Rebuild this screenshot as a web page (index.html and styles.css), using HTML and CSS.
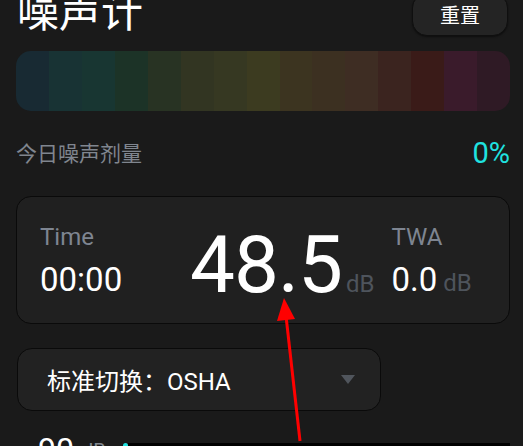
FILE: index.html
```html
<!DOCTYPE html>
<html lang="zh-CN">

<head>
    <title>噪声计</title>
    <meta charset="UTF-8">
    <meta name="viewport" content="width=device-width, initial-scale=1.0">
    <link rel="stylesheet" href="styles.css">
</head>

<body>
    <div class="page">
        <div class="header">
            <h1 class="title">噪声计</h1>
            <button class="btn-reset">重置</button>
        </div>
        <div class="levels">
            <span class="lv1"></span>
            <span class="lv2"></span>
            <span class="lv3"></span>
            <span class="lv4"></span>
            <span class="lv5"></span>
            <span class="lv6"></span>
            <span class="lv7"></span>
            <span class="lv8"></span>
            <span class="lv9"></span>
            <span class="lv10"></span>
            <span class="lv11"></span>
            <span class="lv12"></span>
            <span class="lv13"></span>
            <span class="lv14"></span>
            <span class="lv15"></span>
        </div>
        <div class="dose">
            <span class="dose-label">今日噪声剂量</span>
            <span class="dose-value">0%</span>
        </div>
        <div class="meter">
            <div class="col-time">
                <span class="label">Time</span>
                <span class="value">00:00</span>
            </div>
            <div class="reading">
                <span class="big">48.5</span>
                <span class="unit">dB</span>
            </div>
            <div class="col-twa">
                <span class="label">TWA</span>
                <div class="twa-row">
                    <span class="value">0.0</span>
                    <span class="unit">dB</span>
                </div>
            </div>
        </div>
        <div class="select">
            <span>标准切换：OSHA</span>
            <i class="caret"></i>
        </div>
        <div class="scale">
            <span class="scale-num">90</span>
            <span class="scale-unit">dB</span>
            <i class="dot"></i>
            <i class="track"></i>
        </div>
    </div>
    <!-- 标注箭头 -->
    <svg class="arrow" width="523" height="446" viewBox="0 0 523 446">
        <line x1="300" y1="441" x2="286" y2="316" stroke="#ff0000" stroke-width="3"/>
        <polygon points="284,298 277,321 295,319" fill="#ff0000"/>
    </svg>
</body>

</html>
```

FILE: styles.css
```css
html,
body {
    margin: 0;
    height: 100%;
    overflow: hidden;
}
body {
    background-color: #1a1a1a;
    color: #fff;
    font-family: Roboto, "Noto Sans CJK SC", sans-serif;
}
.page {
    position: relative;
    padding: 0 13px 0 16px;
}
.header {
    display: flex;
    justify-content: space-between;
    align-items: flex-end;
    height: 50px;
    margin-top: -14px;
}
.title {
    margin: 0 0 0 1px;
    font-size: 42px;
    font-weight: normal;
    line-height: 50px;
    position: relative;
    top: 2px;
}
.btn-reset {
    width: 96px;
    height: 43px;
    margin-right: 2px;
    border: 1px solid #0f0f0f;
    border-radius: 15px;
    background-color: #242424;
    color: #fff;
    font-family: "Noto Sans CJK SC", sans-serif;
    font-size: 20px;
    padding-top: 0;
    box-shadow: 0 1px 2px rgba(0,0,0,0.5);
}
.levels {
    display: flex;
    height: 60px;
    margin-top: 15px;
    border-radius: 15px;
    overflow: hidden;
}
.levels>span {
    flex: 1;
}
.lv1 { background-color: #182a33; }
.lv2 { background-color: #183334; }
.lv3 { background-color: #183632; }
.lv4 { background-color: #1c3327; }
.lv5 { background-color: #283323; }
.lv6 { background-color: #323522; }
.lv7 { background-color: #363822; }
.lv8 { background-color: #3c3b20; }
.lv9 { background-color: #3c3420; }
.lv10 { background-color: #3c3021; }
.lv11 { background-color: #3e2d23; }
.lv12 { background-color: #3b241f; }
.lv13 { background-color: #3a1b18; }
.lv14 { background-color: #3a1b2b; }
.lv15 { background-color: #2f1a25; }
.dose {
    display: flex;
    justify-content: space-between;
    align-items: center;
    height: 46px;
    margin-top: 19px;
}
.dose-label {
    font-family: "Noto Sans CJK SC", sans-serif;
    font-size: 21px;
    color: #80868f;
    margin-bottom: 3px;
}
.dose-value {
    font-size: 29px;
    color: #1fe3e0;
}
.meter {
    display: flex;
    align-items: flex-end;
    height: 128px;
    margin-top: 20px;
    padding: 0 20px 24px 23px;
    box-sizing: border-box;
    border: 1.5px solid #0a0a0a;
    border-radius: 15px;
    background-color: #202020;
}
.col-time,
.col-twa {
    display: flex;
    flex-direction: column;
}
.col-time {
    width: 150px;
}
.label {
    font-size: 24px;
    line-height: 28px;
    color: #7e8591;
}
.value {
    font-size: 33px;
    line-height: 38px;
    margin-top: 10px;
}
.reading {
    display: flex;
    align-items: baseline;
}
.big {
    font-size: 80px;
    line-height: 68px;
    letter-spacing: -1px;
}
.unit {
    font-size: 24px;
    color: #4e545c;
    margin-left: 6px;
}
.reading .unit {
    margin-left: 4px;
}
.col-twa {
    margin-left: 17px;
}
.twa-row {
    display: flex;
    align-items: baseline;
}
.select {
    display: flex;
    justify-content: space-between;
    align-items: center;
    width: 364px;
    height: 63px;
    margin: 24px 0 0 1px;
    padding: 0 25px 0 29px;
    box-sizing: border-box;
    border: 1.5px solid #0a0a0a;
    border-radius: 15px;
    background-color: #222;
    font-size: 24px;
}
.caret {
    width: 0;
    height: 0;
    border-left: 7px solid transparent;
    border-right: 7px solid transparent;
    border-top: 9px solid #50555c;
}
.scale {
    display: flex;
    align-items: flex-start;
    height: 40px;
    margin-top: 19px;
    padding-left: 22px;
}
.scale-num {
    font-size: 32px;
    line-height: 38px;
}
.scale-unit {
    font-size: 20px;
    line-height: 38px;
    color: #80868f;
    margin-left: 8px;
    margin-top: 2px;
}
.dot {
    width: 5px;
    height: 5px;
    margin: 13px 0 0 17px;
    border-radius: 50%;
    background-color: #1fe3e0;
}
.track {
    flex: 1;
    height: 4px;
    margin-top: 13px;
    background-color: #000;
}
.arrow {
    position: absolute;
    left: 0;
    top: 0;
}
```
